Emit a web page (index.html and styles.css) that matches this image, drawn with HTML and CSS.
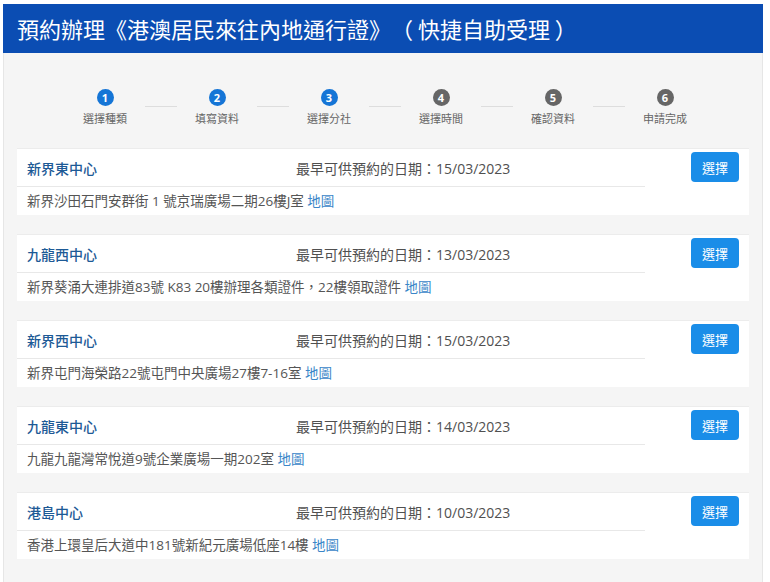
FILE: index.html
```html
<!DOCTYPE html>
<html lang="zh-HK">
  <head>
    <meta charset="UTF-8" />
    <meta name="viewport" content="width=device-width, initial-scale=1.0" />
    <title>預約辦理</title>
    <link rel="stylesheet" href="styles.css">
  </head>
  <body>
    <div class="page">
      <!-- 標題 -->
      <div class="header">預約辦理《港澳居民來往內地通行證》　（ 快捷自助受理 ）</div>

      <div class="main">
        <!-- 步驟 -->
        <div class="steps">
          <div class="step done"><span class="num">1</span><span class="label">選擇種類</span></div>
          <div class="line"></div>
          <div class="step done"><span class="num">2</span><span class="label">填寫資料</span></div>
          <div class="line"></div>
          <div class="step done"><span class="num">3</span><span class="label">選擇分社</span></div>
          <div class="line"></div>
          <div class="step"><span class="num">4</span><span class="label">選擇時間</span></div>
          <div class="line"></div>
          <div class="step"><span class="num">5</span><span class="label">確認資料</span></div>
          <div class="line"></div>
          <div class="step"><span class="num">6</span><span class="label">申請完成</span></div>
        </div>

        <!-- 分社列表 -->
        <div class="card">
          <div class="card-info">
            <div class="card-top">
              <span class="name">新界東中心</span>
              <span class="date">最早可供預約的日期：15/03/2023</span>
            </div>
            <div class="addr">新界沙田石門安群街 1 號京瑞廣場二期26樓J室 <a href="#">地圖</a></div>
          </div>
          <div class="card-action"><button class="btn">選擇</button></div>
        </div>

        <div class="card">
          <div class="card-info">
            <div class="card-top">
              <span class="name">九龍西中心</span>
              <span class="date">最早可供預約的日期：13/03/2023</span>
            </div>
            <div class="addr">新界葵涌大連排道83號 K83 20樓辦理各類證件，22樓領取證件 <a href="#">地圖</a></div>
          </div>
          <div class="card-action"><button class="btn">選擇</button></div>
        </div>

        <div class="card">
          <div class="card-info">
            <div class="card-top">
              <span class="name">新界西中心</span>
              <span class="date">最早可供預約的日期：15/03/2023</span>
            </div>
            <div class="addr">新界屯門海榮路22號屯門中央廣場27樓7-16室 <a href="#">地圖</a></div>
          </div>
          <div class="card-action"><button class="btn">選擇</button></div>
        </div>

        <div class="card">
          <div class="card-info">
            <div class="card-top">
              <span class="name">九龍東中心</span>
              <span class="date">最早可供預約的日期：14/03/2023</span>
            </div>
            <div class="addr">九龍九龍灣常悅道9號企業廣場一期202室 <a href="#">地圖</a></div>
          </div>
          <div class="card-action"><button class="btn">選擇</button></div>
        </div>

        <div class="card">
          <div class="card-info">
            <div class="card-top">
              <span class="name">港島中心</span>
              <span class="date">最早可供預約的日期：10/03/2023</span>
            </div>
            <div class="addr">香港上環皇后大道中181號新紀元廣場低座14樓 <a href="#">地圖</a></div>
          </div>
          <div class="card-action"><button class="btn">選擇</button></div>
        </div>
      </div>
    </div>
  </body>
</html>
```

FILE: styles.css
```css
/* 頁面基礎 */
body {
  margin: 0;
  padding: 0;
  background-color: #fff;
  font-family: "Open Sans", "Noto Sans CJK TC", sans-serif;
  color: #555;
}

.page {
  width: 760px;
  margin-left: 3px;
  padding-top: 4px;
}

/* 標題條 */
.header {
  height: 49px;
  line-height: 49px;
  padding-left: 14px;
  background-color: #0b4db3;
  color: #fff;
  font-size: 22px;
  font-family: "Noto Sans CJK TC", sans-serif;
  white-space: nowrap;
}

/* 主區域 */
.main {
  background-color: #f5f5f5;
  border-left: 1px solid #e6e6e6;
  border-right: 1px solid #e6e6e6;
  padding: 0 13px;
  min-height: 529px;
  box-sizing: border-box;
}

/* 步驟條 */
.steps {
  display: flex;
  justify-content: center;
  padding: 36px 0 0 4px;
  height: 59px;
}

.step {
  display: flex;
  flex-direction: column;
  align-items: center;
  width: 60px;
}

.step .num {
  width: 17px;
  height: 17px;
  border-radius: 50%;
  background-color: #666;
  color: #fff;
  font-size: 11px;
  font-weight: bold;
  line-height: 17px;
  text-align: center;
}

.step.done .num {
  background-color: #1575d6;
}

.step .label {
  margin-top: 4px;
  font-size: 11px;
  color: #666;
  font-family: "Noto Sans CJK TC", sans-serif;
}

.line {
  flex: 0 0 32px;
  height: 1px;
  margin: 17px 10px 0 10px;
  background-color: #ddd;
}

/* 分社卡片 */
.card {
  display: flex;
  background-color: #fff;
  border-top: 1px solid #ececec;
  height: 66px;
  margin-bottom: 19px;
}

.card-info {
  width: 628px;
}

.card-top {
  display: flex;
  align-items: center;
  height: 37px;
  border-bottom: 1px solid #e8e8e8;
}

.name {
  width: 269px;
  padding-left: 10px;
  font-size: 14px;
  font-weight: 500;
  color: #1d5a96;
  font-family: "Noto Sans CJK TC", sans-serif;
}

.date {
  font-size: 14px;
  color: #505050;
}

.addr {
  height: 28px;
  line-height: 28px;
  padding-left: 10px;
  font-size: 13.5px;
  color: #555;
  white-space: nowrap;
}

.addr a {
  color: #3a86c8;
  text-decoration: none;
}

.card-action {
  flex: 1;
  display: flex;
  justify-content: flex-end;
  padding: 3px 10px 0 0;
}

.btn {
  width: 48px;
  height: 30px;
  border: none;
  border-radius: 4px;
  background-color: #1a8de8;
  color: #fff;
  font-size: 13px;
  font-family: "Noto Sans CJK TC", sans-serif;
  cursor: pointer;
}
```
